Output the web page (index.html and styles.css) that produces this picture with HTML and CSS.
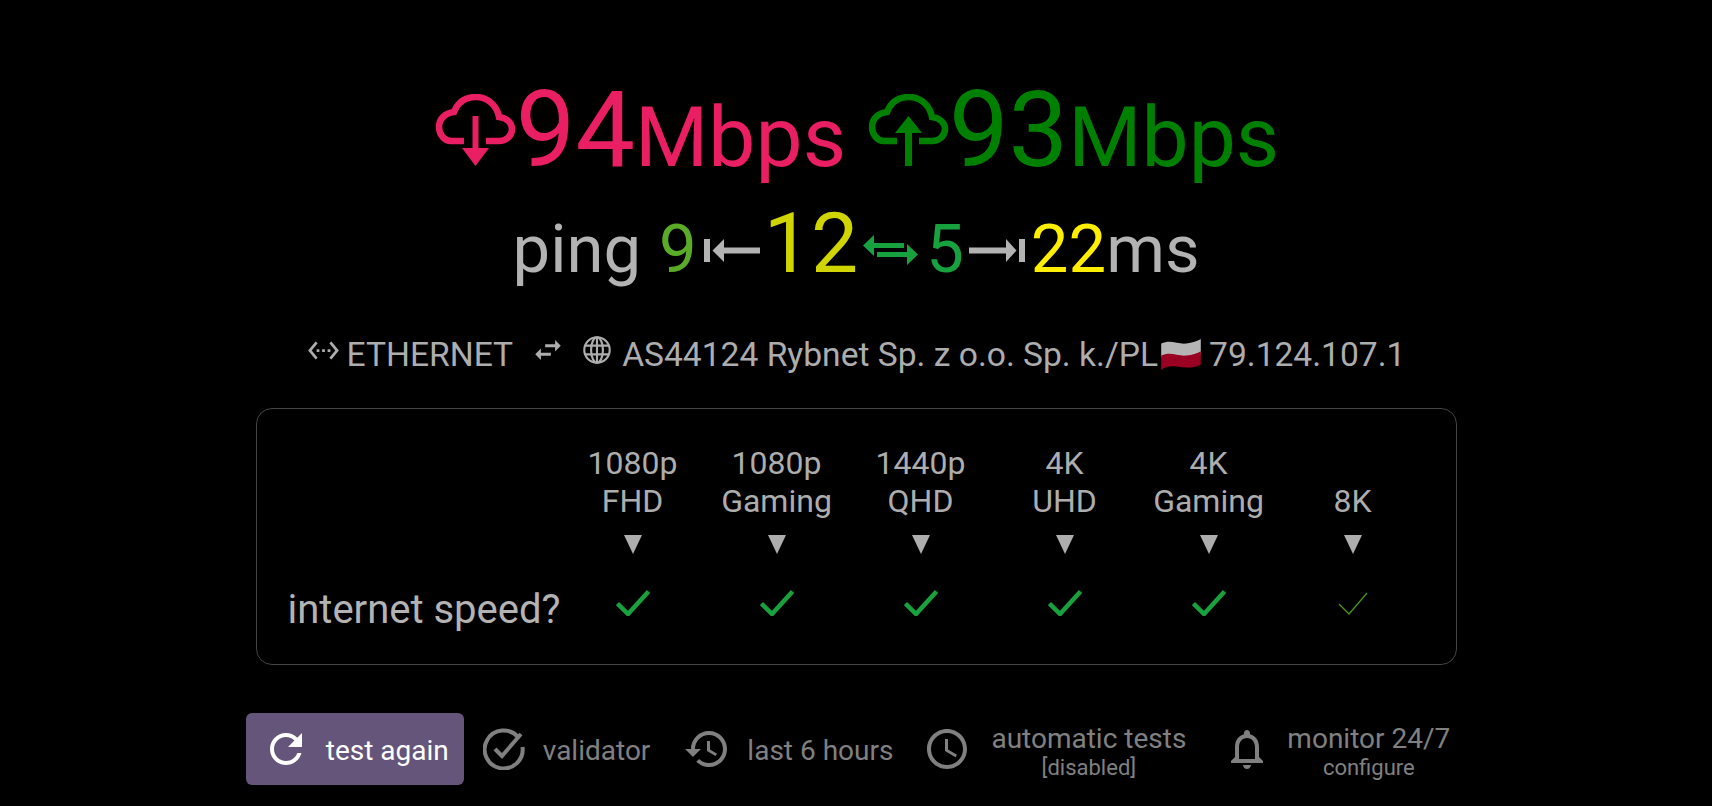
FILE: index.html
```html
<!DOCTYPE html>
<html lang="en">
<head>
  <meta charset="UTF-8">
  <title>speed test</title>
  <link rel="stylesheet" href="styles.css">
</head>
<body>
<div class="page">

  <div class="speeds">
    <div class="speed down">
      <svg class="cloud" viewBox="0 0 80 72">
        <path class="cloud-line" d="M28 47H15C8 47 3 40 3 33C3 25 9 19 18 18C22 8 30 3 40 3C52 3 61 12 63 23C71 24 76 29 76 35C76 42 70 47 63 47H50"/>
        <path class="cloud-arrow" d="M36.500 22H42.500V54H53L39.500 72L26 54H36.500Z"/>
      </svg>
      <span class="big">94</span><span class="unit">Mbps</span>
    </div>
    <div class="speed up">
      <svg class="cloud" viewBox="0 0 80 72">
        <path class="cloud-line" d="M28 47H15C8 47 3 40 3 33C3 25 9 19 18 18C22 8 30 3 40 3C52 3 61 12 63 23C71 24 76 29 76 35C76 42 70 47 63 47H50"/>
        <path class="cloud-arrow" d="M39.500 22L53 39H43V72H36V39H26Z"/>
      </svg>
      <span class="big">93</span><span class="unit">Mbps</span>
    </div>
  </div>

  <div class="ping">
    <span class="ping-label">ping</span>
    <span class="ping-low">9</span>
    <svg class="ping-arrow in" viewBox="0 0 56 23"><path d="M0 0H6V23H0ZM8.500 11.500L20 0V8.500H56V14.500H20V23Z"/></svg>
    <span class="ping-avg">12</span>
    <svg class="ping-swap" viewBox="0 0 55 30"><path d="M0 10.500L11 0V8H41V13H11V21ZM55 19.500L44 9V17H14V22H44V30Z"/></svg>
    <span class="ping-jit">5</span>
    <svg class="ping-arrow out" viewBox="0 0 56 23"><path d="M0 8.500H37V0L47.500 11.500L37 23V14.500H0ZM50 0H56V23H50Z"/></svg>
    <span class="ping-high">22</span><span class="ping-label">ms</span>
  </div>

  <div class="network">
    <svg class="net-icon ether" viewBox="0 0 24 24"><path d="M7.770 6.760L6.230 5.480.82 12l5.410 6.520 1.540-1.280L3.420 12l4.350-5.240zM7 13h2v-2H7v2zm10-2h-2v2h2v-2zm-6 2h2v-2h-2v2zm6.770-7.520l-1.540 1.280L20.580 12l-4.350 5.240 1.540 1.280L23.180 12l-5.410-6.520z"/></svg>
    <span>ETHERNET</span>
    <svg class="net-icon swap" viewBox="0 0 24 24"><path d="M6.990 11L3 15l3.990 4v-3H14v-2H6.990v-3zM21 9l-3.990-4v3H10v2h7.010v3L21 9z"/></svg>
    <svg class="net-icon globe" viewBox="0 0 26 26">
      <circle cx="13" cy="13" r="11.800"/>
      <ellipse cx="13" cy="13" rx="5.500" ry="11.800"/>
      <path d="M13 1.200V24.800M2 9H24M2 17H24"/>
    </svg>
    <span>AS44124 Rybnet Sp. z o.o. Sp. k./PL</span>
    <svg class="flag" viewBox="0 0 38 30">
      <path class="flag-white" d="M1 5C10 1 16 6 24 5C29 4.500 34 3 37 1V15C30 19 22 17 15 16C9 15 5 16 1 18Z"/>
      <path class="flag-red" d="M1 16C10 12 16 17 24 16C29 15.500 34 14 37 12V24C30 28 22 27 15 26C9 25 5 26 1 29Z"/>
    </svg>
    <span>79.124.107.1</span>
  </div>

  <div class="card">
    <div></div>
    <div class="col-head">1080p<br>FHD</div>
    <div class="col-head">1080p<br>Gaming</div>
    <div class="col-head">1440p<br>QHD</div>
    <div class="col-head">4K<br>UHD</div>
    <div class="col-head">4K<br>Gaming</div>
    <div class="col-head">8K</div>

    <div></div>
    <div class="tri-cell"><i class="tri"></i></div>
    <div class="tri-cell"><i class="tri"></i></div>
    <div class="tri-cell"><i class="tri"></i></div>
    <div class="tri-cell"><i class="tri"></i></div>
    <div class="tri-cell"><i class="tri"></i></div>
    <div class="tri-cell"><i class="tri"></i></div>

    <div class="card-label">internet speed?</div>
    <div class="check-cell"><svg class="check" viewBox="0 0 34 26"><path d="M1.500 13.500L12 24L32.500 1.500"/></svg></div>
    <div class="check-cell"><svg class="check" viewBox="0 0 34 26"><path d="M1.500 13.500L12 24L32.500 1.500"/></svg></div>
    <div class="check-cell"><svg class="check" viewBox="0 0 34 26"><path d="M1.500 13.500L12 24L32.500 1.500"/></svg></div>
    <div class="check-cell"><svg class="check" viewBox="0 0 34 26"><path d="M1.500 13.500L12 24L32.500 1.500"/></svg></div>
    <div class="check-cell"><svg class="check" viewBox="0 0 34 26"><path d="M1.500 13.500L12 24L32.500 1.500"/></svg></div>
    <div class="check-cell"><svg class="check thin" viewBox="0 0 34 26"><path d="M3 14L13 24L31 3"/></svg></div>
  </div>

  <div class="actions">
    <div class="btn">
      <svg class="btn-icon" viewBox="0 0 24 24"><path d="M17.650 6.350C16.200 4.900 14.210 4 12 4c-4.420 0-7.990 3.580-7.990 8s3.570 8 7.990 8c3.730 0 6.840-2.550 7.730-6h-2.080c-.82 2.330-3.040 4-5.650 4-3.310 0-6-2.690-6-6s2.690-6 6-6c1.660 0 3.140.69 4.220 1.780L13 11h7V4l-2.350 2.350z"/></svg>
      <span>test again</span>
    </div>
    <div class="action validator">
      <svg class="val-icon" viewBox="0 0 42 42">
        <path d="M35 9A19 19 0 1 0 39.500 19"/>
        <path d="M12 21L19 28L38 6"/>
      </svg>
      <span>validator</span>
    </div>
    <div class="action history">
      <svg class="act-icon" viewBox="0 0 24 24"><path d="M13 3c-4.970 0-9 4.030-9 9H1l3.890 3.890.07.14L9 12H6c0-3.870 3.130-7 7-7s7 3.130 7 7-3.130 7-7 7c-1.930 0-3.680-.79-4.940-2.060l-1.420 1.420C8.270 19.990 10.510 21 13 21c4.970 0 9-4.030 9-9s-4.030-9-9-9zm-1 5v5l4.280 2.540.72-1.210-3.500-2.080V8H12z"/></svg>
      <span>last 6 hours</span>
    </div>
    <div class="action clock">
      <svg class="act-icon" viewBox="0 0 24 24"><path d="M11.990 2C6.470 2 2 6.480 2 12s4.470 10 9.990 10C17.520 22 22 17.520 22 12S17.520 2 11.990 2zM12 20c-4.420 0-8-3.580-8-8s3.580-8 8-8 8 3.580 8 8-3.580 8-8 8zm.5-13H11v6l5.250 3.150.75-1.230-4.500-2.670z"/></svg>
      <div class="two-line"><span>automatic tests</span><small>[disabled]</small></div>
    </div>
    <div class="action bell">
      <svg class="act-icon" viewBox="0 0 24 24"><path d="M12 22c1.100 0 2-.9 2-2h-4c0 1.100.9 2 2 2zm6-6v-5c0-3.070-1.630-5.640-4.500-6.320V4c0-.83-.67-1.500-1.500-1.500s-1.500.67-1.500 1.500v.68C7.640 5.360 6 7.920 6 11v5l-2 2v1h16v-1l-2-2zm-2 1H8v-6c0-2.480 1.510-4.500 4-4.500s4 2.020 4 4.500v6z"/></svg>
      <div class="two-line"><span>monitor 24/7</span><small>configure</small></div>
    </div>
  </div>

</div>
</body>
</html>
```

FILE: styles.css
```css
* {
  margin: 0;
  padding: 0;
  box-sizing: border-box;
}

body {
  background: #000;
  color: #b3b3b3;
  font-family: Roboto, "Liberation Sans", sans-serif;
}

.page {
  display: flex;
  flex-direction: column;
  align-items: center;
  padding-top: 70px;
}

/* top speeds */
.speeds {
  display: flex;
  gap: 23px;
  height: 120px;
  margin-left: 3px;
  align-items: baseline;
}

.speed {
  display: flex;
  align-items: baseline;
  line-height: 120px;
}

.down {
  color: #e91e63;
  fill: #e91e63;
  stroke: #e91e63;
}

.up {
  color: #008000;
  fill: #008000;
  stroke: #008000;
}

.cloud {
  width: 80px;
  height: 72px;
}

.cloud-line {
  fill: none;
  stroke-width: 6.500;
}

.cloud-arrow {
  stroke: none;
}

.big {
  font-size: 106px;
}

.unit {
  font-size: 84px;
}

/* ping row */
.ping {
  display: flex;
  align-items: baseline;
  margin-top: 12px;
  height: 84px;
  line-height: 84px;
  font-size: 67px;
}

.ping-low {
  margin-left: 18px;
  color: #5aac28;
}

.ping-avg {
  color: #d0d400;
  font-size: 84px;
  margin-left: 4px;
}

.ping-jit {
  color: #18a13f;
  margin-left: 8px;
}

.ping-high {
  color: #ffee00;
  margin-left: 6px;
}

.ping-arrow {
  align-self: flex-start;
  width: 56px;
  height: 23px;
  margin-top: 37px;
  fill: #b3b3b3;
}

.ping-arrow.in {
  margin-left: 7px;
}

.ping-arrow.out {
  margin-left: 5px;
}

.ping-swap {
  align-self: flex-start;
  width: 55px;
  height: 30px;
  margin: 33px 0 0 5px;
  fill: #18a13f;
}

/* network line */
.network {
  display: flex;
  align-items: center;
  gap: 7px;
  margin-top: 46px;
  height: 44px;
  font-size: 33.600px;
  color: #adadad;
  white-space: nowrap;
}

.net-icon {
  fill: #adadad;
  margin-top: -8px;
}

.ether {
  width: 33px;
  height: 33px;
}

.swap {
  width: 34px;
  height: 34px;
  margin-left: 11px;
  margin-right: 11px;
}

.globe {
  width: 28px;
  height: 28px;
  margin-right: 4px;
  fill: none;
  stroke: #adadad;
  stroke-width: 2;
}

.flag {
  width: 42px;
  height: 33px;
  margin-left: -5px;
}

.flag-white {
  fill: #b5b5b5;
}

.flag-red {
  fill: #990022;
}

/* resolution table */
.card {
  display: grid;
  grid-template-columns: 273px repeat(6, 144px);
  grid-template-rows: 76px 60px 1fr;
  width: 1201px;
  height: 257px;
  margin-top: 32px;
  padding: 35px 31px 0 31px;
  border: 1px solid #444;
  border-radius: 16px;
}

.col-head {
  display: flex;
  align-items: flex-end;
  justify-content: center;
  text-align: center;
  font-size: 32px;
  line-height: 38px;
  color: #adadad;
}

.tri-cell {
  display: flex;
  justify-content: center;
  padding-top: 15px;
}

.tri {
  width: 0;
  height: 0;
  border-left: 9.500px solid transparent;
  border-right: 9.500px solid transparent;
  border-top: 19px solid #adadad;
}

.card-label {
  font-size: 40px;
  line-height: 48px;
  margin-top: 6px;
  white-space: nowrap;
}

.check-cell {
  display: flex;
  justify-content: center;
  padding-top: 10px;
}

.check {
  width: 34px;
  height: 26px;
  fill: none;
  stroke: #18a13f;
  stroke-width: 4.500;
}

.check.thin {
  stroke: #4a9a20;
  stroke-width: 1.200;
}

/* bottom actions */
.actions {
  display: flex;
  align-items: center;
  margin-top: 48px;
  margin-right: 16px;
  height: 72px;
  color: #808080;
  font-size: 28px;
}

.btn {
  display: flex;
  align-items: center;
  gap: 24px;
  width: 218px;
  height: 72px;
  padding-left: 24px;
  background: #65557a;
  border-radius: 6px;
  color: #fff;
  fill: #fff;
}

.btn span,
.action > span {
  padding-top: 2px;
}

.btn-icon {
  width: 48px;
  height: 48px;
  margin: 0 -8px;
  flex: none;
}

.action {
  display: flex;
  align-items: center;
  fill: #808080;
}

.val-icon {
  width: 42px;
  height: 42px;
  fill: none;
  stroke: #808080;
  stroke-width: 4;
}

.act-icon {
  width: 48px;
  height: 48px;
  flex: none;
}

.validator {
  margin-left: 19px;
  gap: 18px;
}

.history {
  margin-left: 33px;
  gap: 16px;
}

.clock {
  margin-left: 30px;
  gap: 20px;
}

.bell {
  margin-left: 37px;
  gap: 16px;
}

.two-line {
  display: flex;
  flex-direction: column;
  align-items: center;
  padding-top: 3px;
  line-height: 34px;
}

.two-line small {
  font-size: 22px;
  line-height: 24px;
}
```
